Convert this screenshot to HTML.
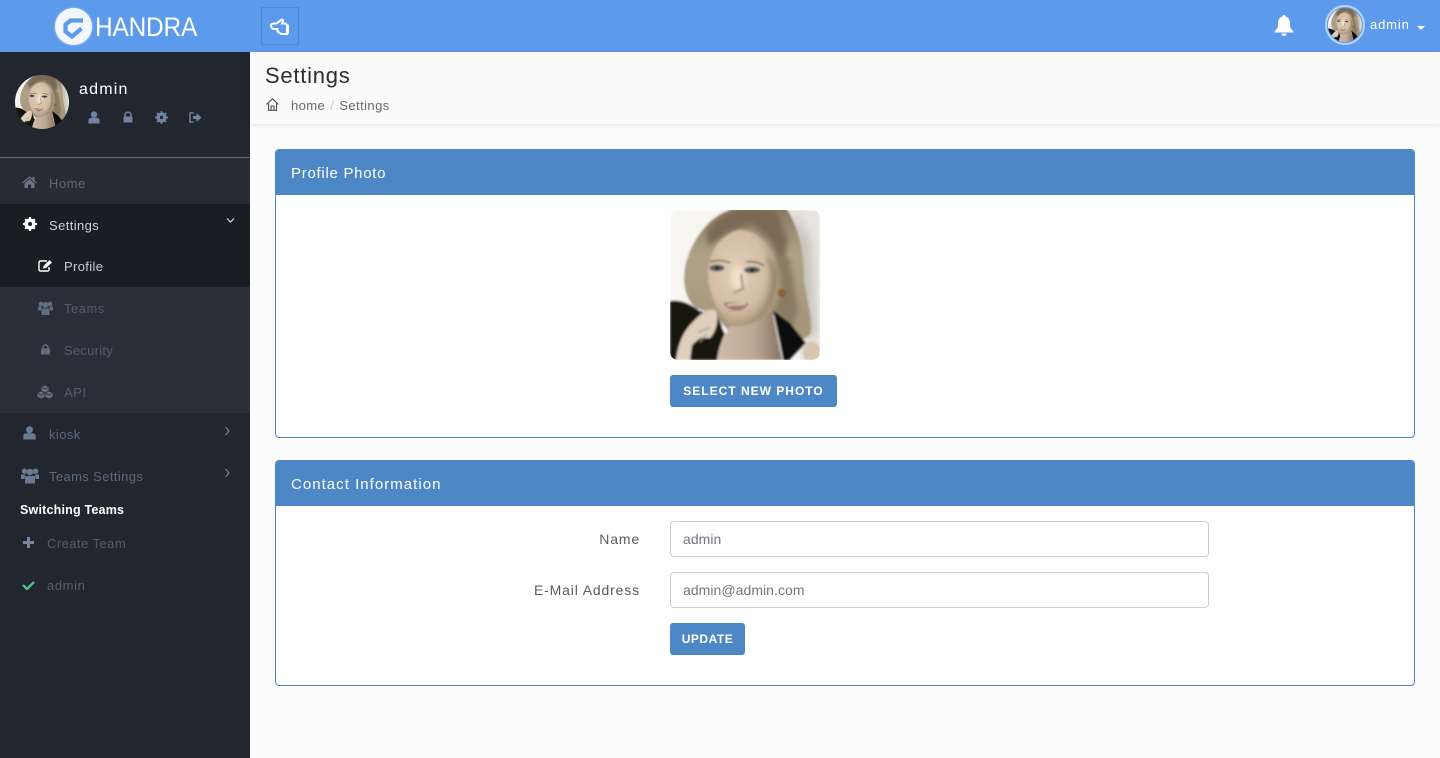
<!DOCTYPE html>
<html lang="en"><head><meta charset="utf-8"><title>Settings</title>
<style>
*{box-sizing:border-box}
html,body{margin:0;padding:0;width:1440px;height:758px;overflow:hidden;background:#fbfbfb;font-family:"Liberation Sans",sans-serif}
.abs,.t,svg.i{position:absolute}
.t{white-space:nowrap;line-height:20px;font-size:13px;letter-spacing:.5px}
#top{position:absolute;left:0;top:0;width:1440px;height:52px;background:#5c9bec}
#side{position:absolute;left:0;top:52px;width:250px;height:706px;background:#22262e}
.row{position:absolute;left:0;width:250px}
.m{color:#5b6b7d}.s{color:#535e70}
#head{position:absolute;left:250px;top:52px;width:1190px;height:72px;background:#fafafa;box-shadow:0 1px 5px rgba(0,0,0,.09)}
.panel{position:absolute;left:275px;width:1140px;background:#fff;border:1px solid #4a88c9;border-radius:4px;overflow:hidden}
.ph{position:absolute;left:-1px;top:-1px;width:1140px;height:46px;background:#4d87c6;color:#fff;font-size:15px;letter-spacing:.7px;line-height:49px;padding-left:16px}
.btn{position:absolute;background:#4d87c6;border-radius:3px;color:#fff;font-size:12px;font-weight:bold;text-align:center;line-height:33px;height:32px;letter-spacing:1px}
.inp{position:absolute;left:670px;width:539px;height:36px;background:#fff;border:1px solid #ccc;border-radius:4px;color:#71767e;font-size:14px;line-height:35px;padding-left:12px;letter-spacing:.05px}
.lab{position:absolute;right:800px;color:#5a5a5f;font-size:14px;line-height:20px;letter-spacing:.85px;white-space:nowrap}
</style></head><body>
<svg width="0" height="0" style="position:absolute"><defs>
<filter id="b1" x="-10%" y="-10%" width="120%" height="120%"><feGaussianBlur stdDeviation="1.1"/></filter>
<filter id="b2" x="-30%" y="-30%" width="160%" height="160%"><feGaussianBlur stdDeviation="5"/></filter>
<filter id="b3" x="-30%" y="-30%" width="160%" height="160%"><feGaussianBlur stdDeviation="2.500"/></filter>
<linearGradient id="hr" x1="0" y1="0" x2="0" y2="1"><stop offset="0" stop-color="#87785f"/><stop offset=".35" stop-color="#b0a288"/><stop offset="1" stop-color="#a39479"/></linearGradient>
<radialGradient id="fc" cx=".42" cy=".42" r=".62"><stop offset="0" stop-color="#e2cfb8"/><stop offset=".65" stop-color="#d4bea4"/><stop offset="1" stop-color="#a8917a"/></radialGradient>
<linearGradient id="nk" x1="0" y1="0" x2="1" y2="0"><stop offset="0" stop-color="#d2bfab"/><stop offset=".6" stop-color="#bca894"/><stop offset="1" stop-color="#85735f"/></linearGradient>
<symbol id="face" viewBox="0 0 150 150"><g filter="url(#b1)">
<rect width="150" height="150" fill="#f8f6f2"/>
<path d="M118 0H150V150H130Z" fill="#e8e5df"/>
<path d="M124 0L140 30L146 125L130 128Z" fill="#c4c0b9" filter="url(#b2)"/>
<path d="M68 -2C42 2 24 26 16 52C12 70 14 88 26 98L42 103L60 122L104 105L128 132L140 125C144 112 137 92 134 70C134 40 128 15 116 -2Z" fill="url(#hr)"/>
<path d="M75 -2C60 0 46 8 36 22L38 36L62 20L82 14L100 30L112 58L118 30L106 0Z" fill="#7a6b55" filter="url(#b3)"/>
<path d="M106 40L112 82L104 100L122 118L128 100L120 50Z" fill="#897a64" filter="url(#b3)"/>
<path d="M70 20C52 23 40 40 38 60C37 84 50 112 66 116C84 118 102 98 106 76C110 50 96 20 70 20Z" fill="url(#fc)"/>
<path d="M96 46C104 60 104 80 94 98C86 108 80 112 72 115C90 112 102 96 106 76C108 62 104 50 96 46Z" fill="#93806a" filter="url(#b3)"/>
<ellipse cx="68" cy="68" rx="7" ry="12" fill="#efe0cb" filter="url(#b3)"/>
<path d="M40 52C46 50 54 50 60 53M76 52C84 51 90 53 94 56" stroke="#6f5c46" stroke-width="1.600" fill="none"/>
<ellipse cx="47" cy="58" rx="7.500" ry="3.200" fill="#4e5a5c"/><ellipse cx="82" cy="60" rx="8" ry="3.200" fill="#4e5a5c"/>
<circle cx="47" cy="58" r="1.800" fill="#14181a"/><circle cx="82" cy="60" r="1.800" fill="#14181a"/>
<path d="M71 64L73 79L63 83" stroke="#a28a72" stroke-width="2" fill="none"/>
<path d="M53 93C60 91 70 94 79 93C74 103 60 104 53 93Z" fill="#a17a6e"/>
<path d="M57 95L75 94" stroke="#eddacd" stroke-width="1.400"/>
<circle cx="112" cy="83" r="4.500" fill="#8a6238"/>
<path d="M60 116C76 118 92 112 102 100L112 150H42Z" fill="url(#nk)"/>
<path d="M0 91C12 89 22 95 30 101L46 104L52 116L46 136L34 150H0Z" fill="#15130f"/>
<path d="M49 112L55 124C50 134 48 142 47 150H34Z" fill="#15130f"/>
<path d="M103 100L120 113L136 133L120 150H113C110 132 106 116 103 100Z" fill="#100f0d"/>
<path d="M6 150C8 136 12 122 24 111C30 104 40 96 46 101C49 110 46 122 40 128L30 128L22 135L20 150Z" fill="#e0cfbb"/>
<path d="M28 122L40 118M30 132L36 124" stroke="#a2907f" stroke-width="1.200" fill="none"/>
<path d="M135 150C131 142 134 133 140 132C146 131 150 135 150 139V150Z" fill="#d7c5b0"/>
</g></symbol>
</defs></svg>

<div id="top">
<div class="abs" style="left:55px;top:8px;width:37px;height:37px;border-radius:50%;background:#f3f6fb;box-shadow:0 0 2px rgba(255,255,255,.6)"></div>
<svg class="i" style="left:55px;top:8px" width="37" height="37" viewBox="0 0 37 37"><path d="M28 12.500H15.500L10.500 16.500V23.500L17 28.500L26.500 20.500" fill="none" stroke="#5c9bec" stroke-width="4.200"/></svg>
<div class="t" style="left:95px;top:12px;font-size:27px;line-height:30px;color:#fff;letter-spacing:-.2px;transform:scaleX(.905);transform-origin:0 0">HANDRA</div>
<div class="abs" style="left:261px;top:7px;width:38px;height:38px;border:1px solid #4b87d6"></div>
<svg class="i" style="left:268px;top:17px" width="24" height="20" viewBox="0 0 24 20"><path d="M3 8.500C3 7 4 6.500 6 6.500H8.500L13 3C14 2 15.500 3 14.800 4.500L14 6.500H17.500L19 8V17H13L9.500 14.500V12H6C4 12 3 10 3 8.500Z" fill="none" stroke="#fff" stroke-width="2"/><path d="M18.500 7.500V17H21V7.500Z" fill="#fff"/></svg>
<svg class="i" style="left:1273px;top:13px" width="22" height="24" viewBox="0 0 22 24"><path d="M11 2C12 2 12.500 2.500 12.500 3.500C16 4.500 17 7 17 11C17 15 18.500 16.500 20.500 18.500V19.500H1.500V18.500C3.500 16.500 5 15 5 11C5 7 6 4.500 9.500 3.500C9.500 2.500 10 2 11 2Z" fill="#fff"/><path d="M8.500 20.500H13.500C13.500 22 12.500 23 11 23C9.500 23 8.500 22 8.500 20.500Z" fill="#fff"/></svg>
<div class="abs" style="left:1325px;top:5px;width:40px;height:40px;border-radius:50%;border:2px solid #b9d4f5;background:#5c9bec"></div>
<svg class="i" style="left:1328px;top:8px;border-radius:50%" width="34" height="34"><use href="#face" width="34" height="34"/></svg>
<div class="t" style="left:1370px;top:15px;color:#fff;letter-spacing:.85px">admin</div>
<div class="abs" style="left:1417px;top:26px;width:0;height:0;border-left:4px solid transparent;border-right:4px solid transparent;border-top:4px solid #fff"></div>
</div>

<div id="side">
<svg class="i" style="left:15px;top:23px;border-radius:50%" width="54" height="54"><use href="#face" width="54" height="54"/></svg>
<div class="t" style="left:79px;top:28px;color:#fff;font-size:16px;letter-spacing:1.200px">admin</div>
<svg class="i" style="left:88px;top:59px" width="12" height="13" viewBox="0 0 12 13"><circle cx="6" cy="3.500" r="3.200" fill="#6f84a1"/><path d="M.5 12.500V9.500C.5 7.500 2 6.800 3.500 6.800H8.500C10 6.800 11.500 7.500 11.500 9.500V12.500Z" fill="#6f84a1"/></svg>
<svg class="i" style="left:123px;top:59px" width="10" height="12" viewBox="0 0 10 12"><path d="M2 6V3.500C2 .5 8 .5 8 3.500V6" fill="none" stroke="#6f84a1" stroke-width="1.500"/><rect x=".5" y="5.500" width="9" height="6" rx="1" fill="#6f84a1"/></svg>
<svg class="i" style="left:155px;top:59px" width="13" height="13" viewBox="0 0 13 13"><circle cx="6.500" cy="6.500" r="3.800" fill="none" stroke="#6f84a1" stroke-width="2.600"/><path d="M6.500 0V13M0 6.500H13M2 2L11 11M11 2L2 11" stroke="#6f84a1" stroke-width="1.700"/><circle cx="6.500" cy="6.500" r="1.600" fill="#22262e"/></svg>
<svg class="i" style="left:189px;top:60px" width="13" height="11" viewBox="0 0 13 11"><path d="M4.500 1H1V10H4.500" fill="none" stroke="#6f84a1" stroke-width="1.500"/><path d="M4 4H7.500V1L12.500 5.500L7.500 10V7H4Z" fill="#6f84a1"/></svg>
<div class="row" style="top:105px;height:1px;background:#6d6f73"></div>
<div class="row" style="top:106px;height:46px;background:#272b33"></div>
<svg class="i" style="left:22px;top:124px" width="15" height="12" viewBox="0 0 15 12"><path d="M.2 6.500L7.500.3L10.500 2.800V1H12.500V4.500L14.800 6.500L14 7.500L7.500 2L1 7.500Z" fill="#6a7688"/><path d="M2.500 7.500L7.500 3.300L12.500 7.500V12H9V8.500H6V12H2.500Z" fill="#6a7688"/></svg>
<div class="t m" style="left:49px;top:122px;letter-spacing:.55px">Home</div>
<div class="row" style="top:152px;height:83px;background:#1a1d22"></div>
<svg class="i" style="left:23px;top:165px" width="14" height="14" viewBox="0 0 14 14"><circle cx="7" cy="7" r="4.200" fill="none" stroke="#fff" stroke-width="2.800"/><path d="M7 0V14M0 7H14M2.200 2.200L11.800 11.800M11.800 2.200L2.200 11.800" stroke="#fff" stroke-width="2"/><circle cx="7" cy="7" r="2" fill="#1a1d22"/></svg>
<div class="t" style="left:49px;top:164px;color:#cfd3d9;letter-spacing:.4px">Settings</div>
<svg class="i" style="left:226px;top:165px" width="9" height="7" viewBox="0 0 9 7"><path d="M1 1.500L4.500 5L8 1.500" fill="none" stroke="#d5d8dc" stroke-width="1.200"/></svg>
<svg class="i" style="left:38px;top:207px" width="15" height="13" viewBox="0 0 15 13"><path d="M9 2H2.500C1.500 2 1 2.500 1 3.500V10.500C1 11.500 1.500 12 2.500 12H9.500C10.500 12 11 11.500 11 10.500V8" fill="none" stroke="#fff" stroke-width="1.400"/><path d="M5 9.500L5.500 7L11.500 1L14 3.500L8 9Z" fill="#fff"/></svg>
<div class="t" style="left:64px;top:205px;color:#c8ccd2;letter-spacing:.35px">Profile</div>
<div class="row" style="top:235px;height:126px;background:#2a2e38"></div>
<svg class="i" style="left:38px;top:249px" width="15" height="14" viewBox="0 0 15 14"><circle cx="3" cy="3" r="2.300" fill="#5f6d81"/><circle cx="12" cy="3" r="2.300" fill="#5f6d81"/><circle cx="7.500" cy="4" r="3" fill="#5f6d81"/><path d="M0 5.500H3.500L3 9.500H0ZM15 5.500H11.500L12 9.500H15Z" fill="#5f6d81"/><path d="M3.500 7.500H11.500V14H3.500Z" fill="#5f6d81"/></svg>
<div class="t s" style="left:64px;top:247px;letter-spacing:.5px">Teams</div>
<svg class="i" style="left:41px;top:292px" width="9" height="11" viewBox="0 0 9 11"><path d="M2 5V3C2 .3 7 .3 7 3V5" fill="none" stroke="#5f6d81" stroke-width="1.400"/><rect y="4.500" width="9" height="6" rx=".8" fill="#5f6d81"/></svg>
<div class="t s" style="left:64px;top:289px;letter-spacing:.25px">Security</div>
<svg class="i" style="left:37px;top:333px" width="16" height="14" viewBox="0 0 16 14"><g fill="#66717f" stroke="#2a2e38" stroke-width=".8"><path d="M8 0L12 2V6L8 8L4 6V2Z"/><path d="M4 6L8 8V12L4 14L0 12V8Z"/><path d="M12 6L16 8V12L12 14L8 12V8Z"/></g><path d="M5 2.500L8 4L11 2.500M1 8.500L4 10L7 8.500M9 8.500L12 10L15 8.500" fill="none" stroke="#2a2e38" stroke-width=".8"/></svg>
<div class="t s" style="left:64px;top:331px">API</div>
<svg class="i" style="left:23px;top:374px" width="13" height="14" viewBox="0 0 13 14"><circle cx="6.500" cy="3.800" r="3.500" fill="#6a7a90"/><path d="M.3 13.500V10C.3 8 2 7.300 3.500 7.300H9.500C11 7.300 12.700 8 12.700 10V13.500Z" fill="#6a7a90"/></svg>
<div class="t m" style="left:49px;top:373px;letter-spacing:.4px">kiosk</div>
<svg class="i" style="left:224px;top:374px" width="7" height="10" viewBox="0 0 7 10"><path d="M1.500 1L5 5L1.500 9" fill="none" stroke="#7c8798" stroke-width="1.100"/></svg>
<svg class="i" style="left:21px;top:416px" width="18" height="16" viewBox="0 0 18 16"><circle cx="3.500" cy="3.200" r="2.700" fill="#6a7a90"/><circle cx="14.500" cy="3.200" r="2.700" fill="#6a7a90"/><circle cx="9" cy="4" r="3.300" fill="#6a7a90"/><path d="M0 6.500H4L3.500 11H0ZM18 6.500H14L14.500 11H18Z" fill="#6a7a90"/><path d="M4 8H14V15.500H4Z" fill="#6a7a90"/></svg>
<div class="t m" style="left:49px;top:415px;letter-spacing:.38px">Teams Settings</div>
<svg class="i" style="left:224px;top:416px" width="7" height="10" viewBox="0 0 7 10"><path d="M1.500 1L5 5L1.500 9" fill="none" stroke="#7c8798" stroke-width="1.100"/></svg>
<div class="t" style="left:20px;top:448px;color:#fff;font-weight:bold;font-size:12.500px;letter-spacing:.2px">Switching Teams</div>
<svg class="i" style="left:23px;top:485px" width="11" height="11" viewBox="0 0 11 11"><path d="M4 0H7V4H11V7H7V11H4V7H0V4H4Z" fill="#77879c"/></svg>
<div class="t s" style="left:47px;top:482px;letter-spacing:.45px">Create Team</div>
<svg class="i" style="left:22px;top:528px" width="13" height="10" viewBox="0 0 13 10"><path d="M1 5L5 9L12 2" fill="none" stroke="#4ec283" stroke-width="2.400"/></svg>
<div class="t s" style="left:47px;top:524px;letter-spacing:.6px">admin</div>
</div>

<div id="head">
<div class="t" style="left:15px;top:9px;font-size:22px;line-height:30px;color:#2b2e33;letter-spacing:.75px">Settings</div>
<svg class="i" style="left:16px;top:46px" width="13" height="13" viewBox="0 0 13 13"><path d="M.5 6.500L6.500.8L12.500 6.500M2.500 5.500V12.300H10.500V5.500M5 12.300V8H8V12.300" fill="none" stroke="#47515c" stroke-width="1.100"/></svg>
<div class="t" style="left:41px;top:44px;color:#666a70;letter-spacing:.42px">home <span style="color:#c9c9c9;margin:0 1px">/</span> Settings</div>
</div>

<div class="panel" style="top:149px;height:289px">
<div class="ph" style="letter-spacing:.72px">Profile Photo</div>
<svg class="abs" style="left:394px;top:60px;border-radius:8px" width="150" height="150"><use href="#face" width="150" height="150"/></svg>
<div class="btn" style="left:394px;top:225px;width:167px">SELECT NEW PHOTO</div>
</div>

<div class="panel" style="top:460px;height:226px">
<div class="ph" style="letter-spacing:1.030px">Contact Information</div>
</div>
<div class="lab" style="top:529px">Name</div>
<div class="inp" style="top:521px">admin</div>
<div class="lab" style="top:580px">E-Mail Address</div>
<div class="inp" style="top:572px">admin@admin.com</div>
<div class="btn" style="left:670px;top:623px;width:75px;letter-spacing:.5px">UPDATE</div>
</body></html>
